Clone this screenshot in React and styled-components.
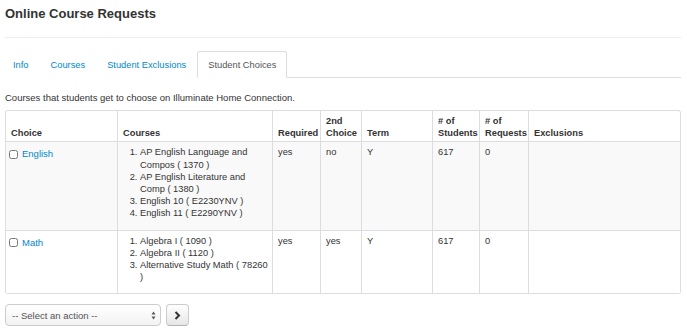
import React from 'react';
import styled, { createGlobalStyle } from 'styled-components';

const GlobalStyle = createGlobalStyle`
  body {
    margin: 0;
    background: #fff;
    font-family: "Liberation Sans", Arial, sans-serif;
    font-size: 9.5px;
    color: #333;
  }
`;

const choices = [
  {
    name: 'English',
    courses: [
      'AP English Language and Compos ( 1370 )',
      'AP English Literature and Comp ( 1380 )',
      'English 10 ( E2230YNV )',
      'English 11 ( E2290YNV )',
    ],
    required: 'yes',
    second: 'no',
    term: 'Y',
    students: '617',
    requests: '0',
    striped: true,
  },
  {
    name: 'Math',
    courses: ['Algebra I ( 1090 )', 'Algebra II ( 1120 )', 'Alternative Study Math ( 78260 )'],
    required: 'yes',
    second: 'yes',
    term: 'Y',
    students: '617',
    requests: '0',
    striped: false,
  },
];

const tabs = ['Info', 'Courses', 'Student Exclusions', 'Student Choices'];

export default function App() {
  return (
    <>
      <GlobalStyle />
      <Page>
        <Title>Online Course Requests</Title>
        <Tabs>
          {tabs.map((t) => (
            <Tab key={t} active={t === 'Student Choices'}>{t}</Tab>
          ))}
        </Tabs>
        <Intro>Courses that students get to choose on Illuminate Home Connection.</Intro>

        <Table>
          <colgroup>
            <col style={{ width: 112 }} />
            <col style={{ width: 155 }} />
            <col style={{ width: 48 }} />
            <col style={{ width: 41 }} />
            <col style={{ width: 71 }} />
            <col style={{ width: 47 }} />
            <col style={{ width: 49 }} />
            <col />
          </colgroup>
          <thead>
            <tr>
              <Th>Choice</Th>
              <Th>Courses</Th>
              <Th>Required</Th>
              <Th>2nd Choice</Th>
              <Th>Term</Th>
              <Th># of Students</Th>
              <Th># of Requests</Th>
              <Th>Exclusions</Th>
            </tr>
          </thead>
          <tbody>
            {choices.map((c) => (
              <Row key={c.name} striped={c.striped}>
                <Td>
                  <ChoiceCell>
                    <Check type="checkbox" />
                    <Link href="#">{c.name}</Link>
                  </ChoiceCell>
                </Td>
                <Td>
                  <CourseList>
                    {c.courses.map((x) => <li key={x}>{x}</li>)}
                  </CourseList>
                </Td>
                <Td>{c.required}</Td>
                <Td>{c.second}</Td>
                <Td>{c.term}</Td>
                <Td>{c.students}</Td>
                <Td>{c.requests}</Td>
                <Td></Td>
              </Row>
            ))}
          </tbody>
        </Table>

        <Actions>
          <Select>
            <span>-- Select an action --</span>
            <svg width="5" height="9" viewBox="0 0 5 9">
              <path d="M2.5 0.5 L4.5 3.5 L0.5 3.5 Z" fill="#555" />
              <path d="M2.5 8.5 L4.5 5.5 L0.5 5.5 Z" fill="#555" />
            </svg>
          </Select>
          <GoButton>
            <svg width="7" height="9" viewBox="0 0 7 9">
              <path d="M1.5 1 L5 4.5 L1.5 8" stroke="#333" strokeWidth="2" fill="none" />
            </svg>
          </GoButton>
        </Actions>
      </Page>
    </>
  );
}

const Page = styled.div`
  padding: 0 6px 0 5px;
`;

const Title = styled.h3`
  margin: 0;
  padding: 6px 0 15px;
  font-size: 13px;
  line-height: 16px;
  font-weight: bold;
  color: #333;
  border-bottom: 1px solid #eee;
`;

const Tabs = styled.div`
  display: flex;
  margin-top: 13px;
  border-bottom: 1px solid #ddd;
  height: 26px;
`;

const Tab = styled.div`
  padding: 0 10px;
  display: flex;
  align-items: center;
  font-size: 9.3px;
  color: ${(p) => (p.active ? '#555' : '#0088cc')};
  background: #fff;
  border: 1px solid ${(p) => (p.active ? '#ddd' : 'transparent')};
  border-bottom-color: ${(p) => (p.active ? '#fff' : 'transparent')};
  border-radius: 3px 3px 0 0;
  margin-bottom: -1px;
  &:first-child { padding-left: 7px; }
`;

const Intro = styled.p`
  margin: 14px 0 6px;
  line-height: 12px;
`;

const Table = styled.table`
  width: 100%;
  table-layout: fixed;
  border-collapse: separate;
  border-spacing: 0;
  border: 1px solid #ddd;
  border-left: 0;
  border-radius: 3px;
  font-size: 9.3px;
`;

const Th = styled.th`
  text-align: left;
  vertical-align: bottom;
  font-weight: bold;
  padding: 4px 5px 2px;
  line-height: 12.2px;
  border-left: 1px solid #ddd;
  border-bottom: 1px solid #ddd;
`;

const Row = styled.tr`
  background: ${(p) => (p.striped ? '#f9f9f9' : '#fff')};
  &:not(:last-child) td { border-bottom: 1px solid #ddd; }
`;

const Td = styled.td`
  vertical-align: top;
  padding: 4px 4px 4px 5px;
  line-height: 12.2px;
  border-left: 1px solid #ddd;
`;

const ChoiceCell = styled.div`
  display: flex;
  align-items: center;
  gap: 4px;
  padding-top: 3px;
  line-height: 10px;
`;

const Check = styled.input`
  width: 9px;
  height: 9px;
  margin: 0 0 0 -2px;
`;

const Link = styled.a`
  color: #0088cc;
  text-decoration: none;
  font-size: 9.5px;
`;

const CourseList = styled.ol`
  margin: 0 0 6px;
  padding-left: 17px;
`;

const Actions = styled.div`
  display: flex;
  gap: 5px;
  margin-top: 10px;
`;

const Select = styled.div`
  width: 156px;
  height: 22px;
  box-sizing: border-box;
  display: flex;
  align-items: center;
  justify-content: space-between;
  padding: 0 4px 0 6px;
  border: 1px solid #ccc;
  border-radius: 4px;
  background: linear-gradient(#fff, #f2f2f2);
  color: #555;
  font-size: 9.5px;
`;

const GoButton = styled.div`
  width: 23px;
  height: 22px;
  box-sizing: border-box;
  display: flex;
  align-items: center;
  justify-content: center;
  border: 1px solid #ccc;
  border-bottom-color: #b3b3b3;
  border-radius: 4px;
  background: linear-gradient(#fff, #e6e6e6);
`;
